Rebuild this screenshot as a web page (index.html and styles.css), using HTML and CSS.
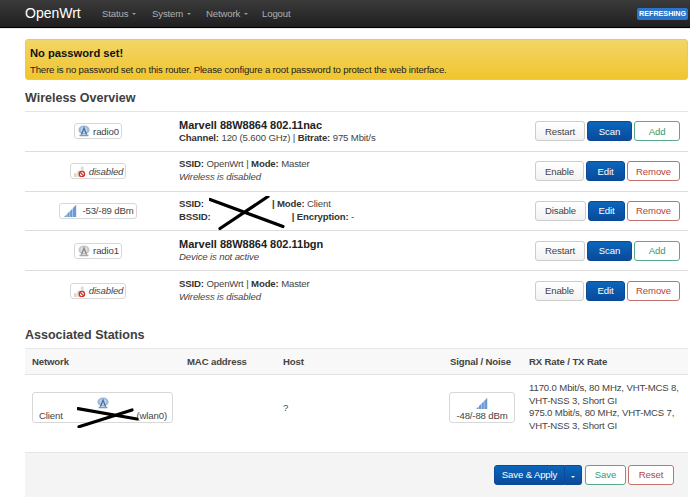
FILE: index.html
```html
<!DOCTYPE html>
<html lang="en">
<head>
<meta charset="utf-8">
<title>OpenWrt - Wireless Overview</title>
<link rel="stylesheet" href="styles.css">
</head>
<body>
<svg class="defs" width="0" height="0" aria-hidden="true">
  <defs>
    <g id="radio">
      <ellipse cx="8" cy="6.500" rx="7.500" ry="6" fill="#9db8d8"/>
      <ellipse cx="8" cy="6.500" rx="4.500" ry="4" fill="#c3d4e8"/>
      <path d="M8 1.500L3.500 13h2L8 6.500 10.500 13h2z" fill="#4a74a8"/>
      <path d="M2 13h12v2H2z" fill="#7f9abb"/>
    </g>
    <g id="radiooff">
      <ellipse cx="8" cy="6.500" rx="7.500" ry="6" fill="#c9c9c9"/>
      <ellipse cx="8" cy="6.500" rx="4.500" ry="4" fill="#e2e2e2"/>
      <path d="M8 1.500L3.500 13h2L8 6.500 10.500 13h2z" fill="#8a8a8a"/>
      <path d="M2 13h12v2H2z" fill="#aaa"/>
    </g>
    <g id="dis">
      <path d="M0 11h3.500v5H0zM4.500 7.500H8V16H4.500z" fill="#e2d3c4"/>
      <path d="M9 2h4v7H9z" fill="#dedede"/>
      <circle cx="10.500" cy="12" r="3.500" fill="#fff" stroke="#c8352f" stroke-width="1.800"/>
      <path d="M8 9.500l5 5" stroke="#c8352f" stroke-width="1.800"/>
    </g>
    <g id="sig">
      <path d="M0 16l3.500-3.500V16zM4 16v-4l3-3v7zM7.500 16V8.500l3-3V16zM11 16V5l4-4v15z" fill="#6d9ad2"/>
    </g>
  </defs>
</svg>

<header class="navbar">
  <a class="brand">OpenWrt</a>
  <nav class="menu">
    <a class="item status">Status<i class="caret"></i></a>
    <a class="item system">System<i class="caret"></i></a>
    <a class="item network">Network<i class="caret"></i></a>
    <a class="item">Logout</a>
  </nav>
  <span class="refresh">REFRESHING</span>
</header>

<main class="page">
  <section class="alert">
    <h4>No password set!</h4>
    <p>There is no password set on this router. Please configure a root password to protect the web interface.</p>
  </section>

  <h2 class="title">Wireless Overview</h2>
  <section class="wifi">
    <div class="row">
      <div class="cell-badge"><span class="badge"><svg class="ic" viewBox="0 0 16 16"><use href="#radio"/></svg>radio0</span></div>
      <div class="info"><strong class="dev">Marvell 88W8864 802.11nac</strong><span><b>Channel:</b> 120 (5.600 GHz) | <b>Bitrate:</b> 975 Mbit/s</span></div>
      <div class="acts"><button class="btn w50">Restart</button><button class="btn pri w45">Scan</button><button class="btn add w46">Add</button></div>
    </div>
    <div class="row">
      <div class="cell-badge"><span class="badge"><svg class="ic" viewBox="0 0 16 16"><use href="#dis"/></svg><em>disabled</em></span></div>
      <div class="info"><span><b>SSID:</b> OpenWrt | <b>Mode:</b> Master</span><em>Wireless is disabled</em></div>
      <div class="acts"><button class="btn w49">Enable</button><button class="btn pri w39">Edit</button><button class="btn del w53">Remove</button></div>
    </div>
    <div class="row redacted">
      <div class="cell-badge"><span class="badge"><svg class="ic sg" viewBox="0 0 16 16"><use href="#sig"/></svg>-53/-89 dBm</span></div>
      <div class="info"><span class="ln"><b>SSID:</b><b class="m1">| Mode:</b> Client</span><span class="ln"><b>BSSID:</b><b class="m2">| Encryption:</b> -</span></div>
      <div class="acts"><button class="btn w51">Disable</button><button class="btn pri w37">Edit</button><button class="btn del w53">Remove</button></div>
      <svg class="cross1" viewBox="0 0 78 36"><path d="M1 3.500L74 30.500M59 .5L11 32.500" fill="none" stroke="#000" stroke-width="3.200" stroke-linecap="round"/></svg>
    </div>
    <div class="row">
      <div class="cell-badge"><span class="badge"><svg class="ic" viewBox="0 0 16 16"><use href="#radiooff"/></svg>radio1</span></div>
      <div class="info"><strong class="dev">Marvell 88W8864 802.11bgn</strong><em>Device is not active</em></div>
      <div class="acts"><button class="btn w50">Restart</button><button class="btn pri w45">Scan</button><button class="btn add w46">Add</button></div>
    </div>
    <div class="row last">
      <div class="cell-badge"><span class="badge"><svg class="ic" viewBox="0 0 16 16"><use href="#dis"/></svg><em>disabled</em></span></div>
      <div class="info"><span><b>SSID:</b> OpenWrt | <b>Mode:</b> Master</span><em>Wireless is disabled</em></div>
      <div class="acts"><button class="btn w49">Enable</button><button class="btn pri w39">Edit</button><button class="btn del w53">Remove</button></div>
    </div>
  </section>

  <h2 class="title second">Associated Stations</h2>
  <section class="stations">
    <div class="st-row st-head">
      <span>Network</span><span>MAC address</span><span>Host</span><span class="sn">Signal / Noise</span><span>RX Rate / TX Rate</span>
    </div>
    <div class="st-row st-body">
      <div class="tile net"><svg class="tic" viewBox="0 0 16 16"><use href="#radio"/></svg><div class="net-l"><span>Client</span><span>(wlan0)</span></div>
        <svg class="cross2" viewBox="0 0 64 22"><path d="M1 2.700L60 13M55 4L2 20.700" fill="none" stroke="#000" stroke-width="3.200" stroke-linecap="round"/></svg>
      </div>
      <div></div>
      <div class="host">?</div>
      <div class="tile sigt"><svg class="tic" viewBox="0 0 16 16"><use href="#sig"/></svg><span>-48/-88 dBm</span></div>
      <div class="rates">1170.0 Mbit/s, 80 MHz, VHT-MCS 8, VHT-NSS 3, Short GI<br>975.0 Mbit/s, 80 MHz, VHT-MCS 7, VHT-NSS 3, Short GI</div>
    </div>
  </section>

  <footer class="actions">
    <div class="split"><button class="btn pri sa">Save &amp; Apply</button><button class="btn pri dd"><i class="caret light"></i></button></div>
    <button class="btn add w41">Save</button>
    <button class="btn del w46">Reset</button>
  </footer>
</main>
</body>
</html>
```
FILE: styles.css
```css
* { box-sizing: border-box; }
html, body { margin: 0; padding: 0; }
body {
  width: 690px; height: 498px; overflow: hidden; background: #fff;
  font-family: "Liberation Sans", Arial, sans-serif; font-size: 9.600px; letter-spacing: -.14px; line-height: 13px; color: #444;
}
.defs { position: absolute; }
.navbar {
  height: 28px; display: flex; align-items: center; padding: 0 2px 0 25px;
  background: linear-gradient(#3b3b3b, #1f1f1f); border-bottom: 1px solid #000;
  box-shadow: 0 1px 0 #e6e6e6;
}
.brand { font-size: 14px; letter-spacing: 0; color: #fff; width: 77px; }
.menu { display: flex; color: #aeaeae; flex: 1; }
.item { display: flex; align-items: center; }
.status { width: 50px; }
.system { width: 54px; }
.network { width: 56px; }
.caret { display: inline-block; margin-left: 4px; border: 2.500px solid transparent; border-top-color: #999; border-bottom: 0; }
.caret.light { border-top-color: #fff; margin: 0; }
.refresh {
  background: #2a75c7; color: #fff; font-weight: bold; font-size: 7.200px; letter-spacing: 0; line-height: 12px; padding: 0 2px; border-radius: 2px; height: 12px; width: 51px; text-align: center; white-space: nowrap;
}
.page { padding: 11px 2px 0 25px; }
.alert {
  height: 41px; padding: 6px 4px; border: 1px solid #e8c860; border-radius: 3px;
  background: linear-gradient(#f3d567, #f0c52e); color: #222;
}
.alert h4 { margin: 0 0 3px; font-size: 11.200px; letter-spacing: 0; line-height: 14px; color: #111; }
.alert p { margin: 0; letter-spacing: -.17px; line-height: 13px; }
.title { margin: 10px 0 0; font-size: 12.500px; letter-spacing: 0; line-height: 16px; height: 21px; color: #404040; }
.wifi { border-top: 1px solid #e4e4e4; }
.row {
  position: relative; height: 39.750px; display: grid; grid-template-columns: 146px 1fr auto;
  align-items: center; border-bottom: 1px solid #ddd;
}
.row.last { border-bottom: 0; }
.cell-badge { display: flex; justify-content: center; width: 146px; }
.badge {
  display: inline-flex; align-items: center; height: 16px; padding: 0 2px; background: #fff;
  border: 1px solid #d8d8d8; border-radius: 3px; color: #444; white-space: nowrap;
}
.ic { width: 12px; height: 12px; margin: 0 3px 0 1px; }
.ic.sg { width: 13px; height: 13px; margin: 0 5px 0 2px; }
.info { display: flex; flex-direction: column; padding-left: 8px; line-height: 12.700px; color: #444; }
.info b { color: #333; }
.dev { font-size: 11px; letter-spacing: 0; line-height: 13px; color: #222; }
.ln { display: block; }
.m1 { margin-left: 68px; }
.m2 { margin-left: 81px; }
.acts { display: flex; gap: 2px; padding-right: 8px; }
.btn {
  height: 20px; padding: 0; border: 1px solid #ccc; border-radius: 3px; font: 9.600px "Liberation Sans", Arial, sans-serif; letter-spacing: -.14px;
  background: linear-gradient(#fff, #f2f2f2); color: #444;
}
.btn.pri { background: linear-gradient(#0a66bb, #0b4a9b); color: #fff; border-color: #0a4a98; }
.btn.add { background: #fff; border-color: #5aa88a; color: #379a6c; }
.btn.del { background: #fff; border-color: #c4736c; color: #b5453c; }
.w37 { width: 37px; }
.w39 { width: 39px; }
.w41 { width: 41px; }
.w45 { width: 45px; }
.w46 { width: 46px; }
.w49 { width: 49px; }
.w50 { width: 50px; }
.w51 { width: 51px; }
.w53 { width: 53px; }
.cross1 { position: absolute; left: 184px; top: 4px; width: 78px; height: 36px; }
.second { margin-top: 16px; height: 21px; }
.st-row { display: grid; grid-template-columns: 155px 96px 166px 80px 1fr; padding-left: 7px; }
.st-head {
  height: 27px; align-items: center; background: #f8f8f8; border-top: 1px solid #e6e6e6; border-bottom: 1px solid #e2e2e2;
  font-weight: bold; color: #444;
}
.sn { padding-left: 1px; }
.st-body { height: 77px; align-items: center; padding-bottom: 12px; }
.tile {
  position: relative; height: 31px; background: #fff; border: 1px solid #d8d8d8; border-radius: 3px;
  display: flex; flex-direction: column; align-items: center;
}
.tic { width: 12px; height: 12px; margin-top: 4px; }
.net { width: 141px; }
.net-l { display: flex; width: 100%; justify-content: space-between; padding: 0 5px 0 6px; }
.cross2 { position: absolute; left: 44px; top: 13px; width: 64px; height: 22px; }
.sigt { width: 66px; }
.rates { line-height: 12.700px; width: 159px; }
.actions {
  height: 45px; display: flex; justify-content: flex-end; align-items: flex-start; gap: 2px; padding: 12px 14px 0 0;
  background: #f4f4f4; border-top: 1px solid #e4e4e4;
}
.split { display: flex; margin-right: 1px; }
.sa { width: 71px; border-radius: 3px 0 0 3px; border-right: 1px solid #4a86c8; }
.dd { width: 17px; border-radius: 0 3px 3px 0; border-left: 0; }
```
